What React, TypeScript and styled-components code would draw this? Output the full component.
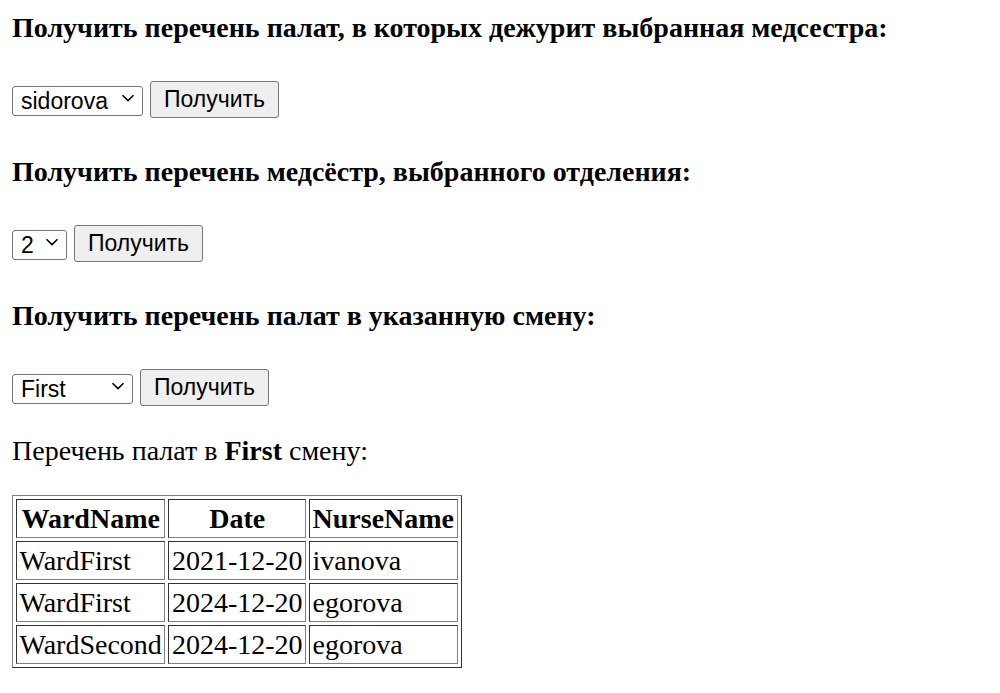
import React from "react";
import styled, { createGlobalStyle } from "styled-components";

const GlobalStyle = createGlobalStyle`
  html, body { background: #ffffff; }
  body {
    margin: 12px;
    font-family: "Liberation Serif", "Times New Roman", serif;
    font-size: 28px;
    color: #000000;
  }
`;

const Page = styled.div`
  display: flex;
  flex-direction: column;
  align-items: flex-start;
`;

const Form = styled.form<{ $last?: boolean }>`
  display: flex;
  flex-direction: column;
  align-items: flex-start;
  margin: 0 0 ${(p) => (p.$last ? "29px" : "40px")};
`;

const Heading = styled.h5<{ $first?: boolean }>`
  margin: ${(p) => (p.$first ? "2px" : "0")} 0 39px;
  font-size: 28px;
  line-height: 28px;
  font-weight: bold;
  font-family: "Liberation Serif", "Times New Roman", serif;
`;

const Controls = styled.div`
  display: flex;
  align-items: center;
  gap: 7px;
  height: 37px;
`;

const SelectWrap = styled.div<{ $w: number }>`
  position: relative;
  width: ${(p) => p.$w}px;
  height: 30px;
  margin-top: -1px;
`;

const Select = styled.select`
  appearance: none;
  -webkit-appearance: none;
  width: 100%;
  height: 100%;
  box-sizing: border-box;
  margin: 0;
  padding: 0 0 0 8px;
  border: 1px solid #767676;
  border-radius: 3px;
  background: #ffffff;
  color: #000000;
  font-family: "Liberation Sans", Arial, sans-serif;
  font-size: 23px;
  line-height: 24px;
  outline: none;
`;

const Chevron = styled.svg`
  position: absolute;
  right: 8px;
  top: 50%;
  width: 14px;
  height: 8px;
  margin-top: -5px;
  pointer-events: none;
`;

const Button = styled.button`
  box-sizing: border-box;
  height: 37px;
  width: 129px;
  margin: 0;
  padding: 0 12px;
  border: 1px solid #767676;
  border-radius: 3px;
  background: #efefef;
  color: #000000;
  font-family: "Liberation Sans", Arial, sans-serif;
  font-size: 23px;
`;

const Summary = styled.p`
  margin: 0 0 28px;
  font-size: 28px;
  line-height: 32px;
`;

const Table = styled.table`
  border-collapse: separate;
  border-spacing: 3px;
  border: 1px solid;
  border-color: #808080 #333333 #333333 #808080;
  font-size: 28px;
  line-height: 32px;
`;

const Th = styled.th`
  border: 1px solid;
  border-color: #333333 #808080 #808080 #333333;
  padding: 2.5px;
  font-weight: bold;
  text-align: center;
`;

const Td = styled.td`
  border: 1px solid;
  border-color: #333333 #808080 #808080 #333333;
  padding: 2.5px;
  text-align: left;
`;

const Dropdown = ({ value, options, width }: { value: string; options: string[]; width: number }) => (
  <SelectWrap $w={width}>
    <Select defaultValue={value}>
      {options.map((o) => (
        <option key={o} value={o}>
          {o}
        </option>
      ))}
    </Select>
    <Chevron viewBox="0 0 14 8">
      <path d="M1.5 1.2 L7 6.6 L12.5 1.2" fill="none" stroke="#000" strokeWidth="1.6" />
    </Chevron>
  </SelectWrap>
);

const rows = [
  ["WardFirst", "2021-12-20", "ivanova"],
  ["WardFirst", "2024-12-20", "egorova"],
  ["WardSecond", "2024-12-20", "egorova"],
];

export default function App() {
  return (
    <>
      <GlobalStyle />
      <Page>
        <Form onSubmit={(e) => e.preventDefault()}>
          <Heading $first>Получить перечень палат, в которых дежурит выбранная медсестра:</Heading>
          <Controls>
            <Dropdown value="sidorova" options={["ivanova", "egorova", "sidorova"]} width={131} />
            <Button type="submit">Получить</Button>
          </Controls>
        </Form>
        <Form onSubmit={(e) => e.preventDefault()}>
          <Heading>Получить перечень медсёстр, выбранного отделения:</Heading>
          <Controls>
            <Dropdown value="2" options={["1", "2", "3"]} width={55} />
            <Button type="submit">Получить</Button>
          </Controls>
        </Form>
        <Form $last onSubmit={(e) => e.preventDefault()}>
          <Heading>Получить перечень палат в указанную смену:</Heading>
          <Controls>
            <Dropdown value="First" options={["First", "Second", "Third"]} width={121} />
            <Button type="submit">Получить</Button>
          </Controls>
        </Form>
        <Summary>
          Перечень палат в <b>First</b> смену:
        </Summary>
        <Table>
          <thead>
            <tr>
              <Th>WardName</Th>
              <Th>Date</Th>
              <Th>NurseName</Th>
            </tr>
          </thead>
          <tbody>
            {rows.map((r, i) => (
              <tr key={i}>
                {r.map((c, j) => (
                  <Td key={j}>{c}</Td>
                ))}
              </tr>
            ))}
          </tbody>
        </Table>
      </Page>
    </>
  );
}
